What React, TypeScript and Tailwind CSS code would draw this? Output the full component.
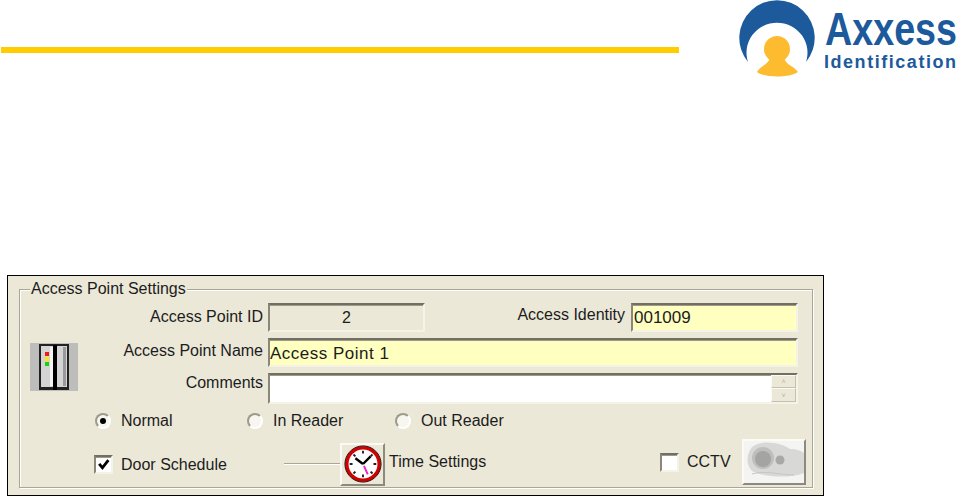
import type { ReactNode } from 'react';

const sunken =
  'border-2 border-t-[#716f64] border-l-[#8a8778] border-r-[#f5f3e8] border-b-[#f5f3e8] shadow-[inset_0_1px_0_#9d9a8a]';
const raised =
  'border-2 border-t-[#fbfaf5] border-l-[#fbfaf5] border-r-[#8c8a7c] border-b-[#8c8a7c]';
const spinBtn =
  'flex items-center justify-center text-[7px] leading-none text-[#b5b2a4] border border-t-[#fbfaf5] border-l-[#fbfaf5] border-r-[#c4c1b1] border-b-[#c4c1b1]';

function Logo() {
  return (
    <svg viewBox="739 0 220 80" className="ml-auto w-[220px] h-[80px]">
      <path d="M748 62A37.7 37.7 0 1 1 806 62A30.5 30 0 1 0 748 62Z" fill="#1c5a9c" />
      <circle cx="777" cy="49" r="13" fill="#fdbb30" />
      <path d="M757 72C760 66 768 65 770 58H784C786 65 794 66 798 72C790 78 764 78 757 72Z" fill="#fdbb30" />
      <text
        x="825"
        y="45"
        fontFamily="'Liberation Sans', sans-serif"
        fontWeight="700"
        fontSize="46"
        textLength="132"
        lengthAdjust="spacingAndGlyphs"
        fill="#1c5a9c"
      >
        Axxess
      </text>
      <text
        x="824"
        y="68"
        fontFamily="'Liberation Sans', sans-serif"
        fontWeight="700"
        fontSize="18"
        textLength="132"
        lengthAdjust="spacing"
        fill="#1c5a9c"
      >
        Identification
      </text>
    </svg>
  );
}

function DoorIcon() {
  return (
    <svg viewBox="0 0 48 48" className="w-[48px] h-[48px]">
      <rect width="48" height="48" fill="#bdbdbb" />
      <rect x="9" y="1" width="30" height="46" fill="#222" />
      <rect x="11" y="3" width="12" height="41" fill="#d4d4d4" />
      <rect x="27" y="3" width="10" height="41" fill="#d4d4d4" />
      <rect x="20" y="4" width="3" height="39" fill="#f4f4f4" />
      <rect x="33" y="4" width="3" height="39" fill="#9a9a9a" />
      <rect x="23" y="2" width="4" height="45" fill="#000" />
      <rect x="15" y="9" width="4" height="4" fill="#ee1c1c" />
      <rect x="15" y="14" width="4" height="4" fill="#ffe600" />
      <rect x="15" y="19" width="4" height="4" fill="#14d414" />
    </svg>
  );
}

function ClockIcon() {
  return (
    <svg viewBox="0 0 40 40" className="w-[38px] h-[38px]">
      <circle cx="20" cy="20" r="17" fill="#fff" stroke="#d30000" strokeWidth="3.5" />
      <circle cx="20" cy="20" r="19" fill="none" stroke="#200000" strokeWidth="1" />
      <path
        d="M20 6v3M20 31v3M6 20h3M31 20h3M10 10l2 2M28 28l2 2M30 10l-2 2M12 28l-2 2"
        stroke="#222"
        strokeWidth="2"
      />
      <path d="M20 20L12 14M20 20L28 12" stroke="#000" strokeWidth="2.5" />
      <path d="M21 22L25 31" stroke="#f020d0" strokeWidth="2" />
    </svg>
  );
}

function CameraImage() {
  return (
    <svg viewBox="0 0 60 42" className="w-[60px] h-[42px]">
      <rect width="60" height="42" fill="#f4f4f2" />
      <path d="M8 6C18 -2 38 2 46 8C52 8 58 10 60 12V32C44 38 20 36 8 30C2 24 2 14 8 6Z" fill="#d8d8d6" />
      <circle cx="19" cy="17" r="11" fill="#bebebc" />
      <circle cx="19" cy="18" r="8" fill="#a4a4a2" />
      <circle cx="36" cy="19" r="4.5" fill="#a8a8a6" />
      <path d="M8 33C22 29 36 34 50 34" stroke="#c6c6c4" fill="none" />
    </svg>
  );
}

function Radio({ checked, label, width }: { checked?: boolean; label: string; width: string }) {
  return (
    <div className={`flex items-center gap-[10px] ${width}`}>
      <span className="flex items-center justify-center w-[16px] h-[16px] rounded-full bg-[#f7f6ef] border-2 border-t-[#9c9a8c] border-l-[#9c9a8c] border-r-white border-b-white">
        {checked && <span className="w-[6px] h-[6px] rounded-full bg-black" />}
      </span>
      <span>{label}</span>
    </div>
  );
}

function Checkbox({ checked, className }: { checked?: boolean; className?: string }) {
  return (
    <span className={`flex items-center justify-center w-[19px] h-[19px] bg-white ${sunken} ${className ?? ''}`}>
      {checked && (
        <svg viewBox="0 0 12 12" className="w-[13px] h-[13px]">
          <path d="M2 5.5L5 9L10.5 2" fill="none" stroke="#000" strokeWidth="2.6" />
        </svg>
      )}
    </span>
  );
}

function Label({ children, className }: { children: ReactNode; className?: string }) {
  return <div className={`text-right pr-[1px] ${className ?? ''}`}>{children}</div>;
}

export default function App() {
  return (
    <div className="w-[959px] h-[496px] bg-white overflow-hidden font-['Liberation_Sans',sans-serif] text-[16px] text-[#1c1c1c]">
      <div className="flex items-start h-[275px]">
        <div className="mt-[47px] ml-[1px] w-[678px] h-[6px] bg-[#ffcc00]" />
        <Logo />
      </div>

      <div className="ml-[7px] w-[817px] h-[221px] border border-black bg-[#ebe8d8] pt-[13px] pl-[11px] pr-[10px]">
        <div className="relative h-[199px] border border-[#a9a698] shadow-[inset_1px_1px_0_#fff,1px_1px_0_#fff] pt-[13px]">
          <span className="absolute left-[10px] -top-[10px] bg-[#ebe8d8] px-[1px] leading-[18px]">
            Access Point Settings
          </span>

          <div className="grid grid-cols-[58px_186px_534px] grid-rows-[29px_29px_31px] gap-y-[6px] items-start">
            <div />
            <Label className="leading-[27px]">Access Point ID</Label>
            <div className="flex ml-[4px]">
              <div className={`w-[157px] h-[29px] text-center leading-[25px] ${sunken}`}>2</div>
              <div className="w-[206px] pr-[6px] text-right leading-[24px]">Access Identity</div>
              <div className={`w-[167px] h-[29px] bg-[#ffffc0] px-[1px] text-[17px] leading-[25px] ${sunken}`}>
                001009
              </div>
            </div>

            <div className="row-span-2 pl-[10px] pt-[5px]">
              <DoorIcon />
            </div>
            <Label className="leading-[26px]">Access Point Name</Label>
            <div className={`ml-[4px] h-[29px] bg-[#ffffc0] text-[17px] tracking-[0.5px] leading-[27px] ${sunken}`}>
              Access Point 1
            </div>

            <Label className="leading-[20px]">Comments</Label>
            <div className={`ml-[4px] h-[31px] bg-white flex justify-end ${sunken}`}>
              <div className="flex flex-col w-[25px] bg-[#ebe8d8]">
                <span className={`h-[13px] ${spinBtn}`}>˄</span>
                <span className={`h-[14px] ${spinBtn}`}>˅</span>
              </div>
            </div>
          </div>

          <div className="flex items-center h-[16px] mt-[9px] ml-[75px]">
            <Radio checked label="Normal" width="w-[152px]" />
            <Radio label="In Reader" width="w-[148px]" />
            <Radio label="Out Reader" width="w-[150px]" />
          </div>

          <div className="flex items-center h-[46px] mt-[10px] ml-[74px]">
            <Checkbox checked className="mt-[4px]" />
            <span className="ml-[8px] mt-[6px] w-[163px]">Door Schedule</span>
            <div className="w-[56px] h-[2px] mt-[4px] bg-[#a9a698] border-b border-white" />
            <button className={`flex items-center justify-center w-[45px] h-[43px] mt-[4px] bg-[#ebe8d8] ${raised}`}>
              <ClockIcon />
            </button>
            <span className="ml-[4px] w-[271px]">Time Settings</span>
            <Checkbox />
            <span className="ml-[8px] w-[55px]">CCTV</span>
            <button className={`w-[64px] h-[46px] bg-[#ebe8d8] overflow-hidden ${raised}`}>
              <CameraImage />
            </button>
          </div>
        </div>
      </div>
    </div>
  );
}
